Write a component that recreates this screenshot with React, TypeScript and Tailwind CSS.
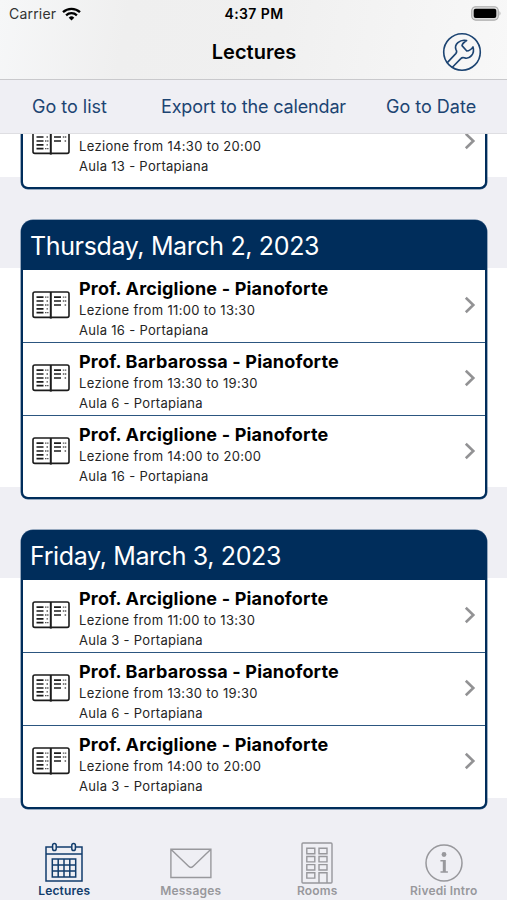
import React from "react";

type Lecture = { title?: string; time: string; room: string };

const thursday: Lecture[] = [
  { title: "Prof. Arciglione - Pianoforte", time: "Lezione from 11:00 to 13:30", room: "Aula 16 - Portapiana" },
  { title: "Prof. Barbarossa - Pianoforte", time: "Lezione from 13:30 to 19:30", room: "Aula 6 - Portapiana" },
  { title: "Prof. Arciglione - Pianoforte", time: "Lezione from 14:00 to 20:00", room: "Aula 16 - Portapiana" },
];

const friday: Lecture[] = [
  { title: "Prof. Arciglione - Pianoforte", time: "Lezione from 11:00 to 13:30", room: "Aula 3 - Portapiana" },
  { title: "Prof. Barbarossa - Pianoforte", time: "Lezione from 13:30 to 19:30", room: "Aula 6 - Portapiana" },
  { title: "Prof. Arciglione - Pianoforte", time: "Lezione from 14:00 to 20:00", room: "Aula 3 - Portapiana" },
];

function BookIcon() {
  return (
    <svg width="38" height="28" viewBox="0 0 38 28" fill="none" stroke="#1c1c1c" className="shrink-0">
      <rect x="1" y="1" width="36" height="25.4" rx="1.8" strokeWidth="1.6" />
      <path d="M18.8 1v26.6" strokeWidth="2" />
      <path d="M4.5 6.2h7M4.5 10h7M4.5 14h7M4.5 17.8h7M4.5 21.7h7M22 6.2h7M22 10h7M22 14h7" strokeWidth="1.7" />
      <path d="M13 6.2h3.5M14.5 10h2M13 14h3.5M14.5 17.8h2M13 21.7h3.5M30.8 6.2h3.5M30.8 10h3.5M32.6 14h1.7" strokeWidth="1.3" strokeDasharray="1.5 .6" stroke="#555" />
    </svg>
  );
}

function Chevron() {
  return (
    <svg width="12" height="18" viewBox="0 0 12 18" fill="none" className="shrink-0">
      <path d="M1.8 1.8 9.3 9l-7.5 7.2" stroke="#929294" strokeWidth="2.6" />
    </svg>
  );
}

function LectureRow({ lecture, last }: { lecture: Lecture; last: boolean }) {
  return (
    <div
      className={`flex h-[73px] shrink-0 items-center pl-[9px] pr-[9px] ${last ? "pb-[3px]" : "border-b border-[#2c5680] pb-[2px]"}`}
    >
      <BookIcon />
      <div className="ml-[9px] flex flex-1 flex-col self-start pt-[6px] text-[13px] whitespace-nowrap text-[#242424]">
        <div className="h-[24px] text-[18px] leading-[25px] font-bold tracking-[0.18px] text-black">{lecture.title}</div>
        <div className="h-[20px] leading-[21px] tracking-[0.33px]">{lecture.time}</div>
        <div className="h-[20px] leading-[21px] tracking-[0.3px]">{lecture.room}</div>
      </div>
      <Chevron />
    </div>
  );
}

function DayCard({ day, lectures }: { day: string; lectures: Lecture[] }) {
  return (
    <section className="mr-[20px] ml-[21px] h-[279px] shrink-0 rounded-t-[12px] rounded-b-[7px] border-2 border-[#002d5b] bg-[#002d5b] shadow-[0_0_0_0.5px_#3f6288]">
      <h2 className="h-[48px] pl-[7px] text-[25px] leading-[49px] font-normal tracking-[-0.36px] whitespace-nowrap text-white">
        {day}
      </h2>
      <div className="h-[227px] rounded-b-[5px] bg-white">
        {lectures.map((l, i) => (
          <LectureRow key={i} lecture={l} last={i === lectures.length - 1} />
        ))}
      </div>
    </section>
  );
}

function CalendarIcon() {
  return (
    <svg width="40" height="42" viewBox="0 0 40 42" fill="none" stroke="currentColor" strokeWidth="1.5">
      <path d="M8.5 5H2v34h36V5h-6.5M12.5 5h15M2 12h36" />
      <rect x="8.6" y="1.5" width="3.6" height="7" rx="1.8" />
      <rect x="27.8" y="1.5" width="3.6" height="7" rx="1.8" />
      <path d="M8.3 17h23.4v18H8.3zM8.3 23h23.4M8.3 29h23.4M14.2 17v18M20 17v18M25.8 17v18" />
    </svg>
  );
}

function MailIcon() {
  return (
    <svg width="42" height="42" viewBox="0 0 42 42" fill="none" stroke="currentColor" strokeWidth="1.4">
      <path d="M.9 7.3h40v28.2H.9zM.9 7.3l17.4 16.8q2.6 2.7 5.2 0L40.9 7.3" />
    </svg>
  );
}

function BuildingIcon() {
  return (
    <svg width="32" height="42" viewBox="0 0 32 42" fill="none" stroke="currentColor" strokeWidth="1.4">
      <rect x="1" y="1" width="30" height="40" rx="1" />
      <path d="M5.8 6.3h8v5.4h-8zM18 6.3h8v5.4h-8zM5.8 14.5h8v5.4h-8zM18 14.5h8v5.4h-8zM5.8 22.6h8V28h-8zM18 22.6h8V28h-8zM5.8 30.7h8v5.4h-8zM18 41V30.7h8V41" />
    </svg>
  );
}

function InfoIcon() {
  return (
    <svg width="40" height="42" viewBox="0 0 40 42" fill="none">
      <circle cx="20" cy="21" r="18" stroke="currentColor" strokeWidth="1.5" />
      <circle cx="20" cy="12.5" r="2.4" fill="currentColor" />
      <path d="M16.4 18h5.4v11.2h2.1v1.5h-7.4v-1.5h2.3v-9.7h-2.4z" fill="currentColor" />
    </svg>
  );
}

function WrenchIcon() {
  return (
    <svg width="40" height="40" viewBox="0 0 40 40" fill="none" stroke="#1c4472" strokeWidth="1.6" strokeLinejoin="round">
      <circle cx="20" cy="20" r="18.3" />
      <path d="M5.3 30.6 13.8 21.6Q15.4 19.8 14 17.6C11.9 12.6 17.6 7 24.6 8.5Q20.4 11.2 20 13.6L24.8 19Q28.2 19 31 14.9C33.2 21.6 27.6 27.8 22.2 25.8Q20.2 25.1 18.8 26.6L10.4 35.2" />
    </svg>
  );
}

function Tab({ label, icon, active }: { label: string; icon: React.ReactNode; active?: boolean }) {
  return (
    <div className={`flex flex-1 flex-col items-center ${active ? "text-[#123d6c]" : "text-[#98989c]"}`}>
      {icon}
      <span className="text-[12px] leading-[14px] font-semibold tracking-[0.18px] whitespace-nowrap">{label}</span>
    </div>
  );
}

export default function App() {
  return (
    <div className="flex h-[900px] w-[507px] flex-col overflow-hidden bg-[#efeff4] font-['Inter','Liberation_Sans',sans-serif] text-black">
      <header className="flex h-[80px] shrink-0 flex-col border-b border-[#c9c9cc] bg-[linear-gradient(100deg,#f6f7f8,#efefef_25%,#f0f0f0_55%,#f8f8f8)]">
        <div className="grid h-[27px] grid-cols-3 items-center pr-[5px] pl-[9px] text-[14px]">
          <div className="flex items-center gap-[6px] text-[#333]">
            <span className="tracking-[0.2px]">Carrier</span>
            <svg width="19" height="14" viewBox="0 0 19 14" fill="none" stroke="#000" strokeWidth="2.3">
              <path d="M1 5.2a12.3 12.3 0 0 1 17 0M4.1 8.3a7.8 7.8 0 0 1 10.8 0" />
              <path d="m9.5 13.6-2.8-2.9a4 4 0 0 1 5.6 0z" fill="#000" stroke="none" />
            </svg>
          </div>
          <div className="pr-[3px] text-center font-semibold tracking-[0.4px]">4:37 PM</div>
          <svg width="31" height="15" viewBox="0 0 31 15" className="justify-self-end">
            <rect x=".7" y=".7" width="26.6" height="13.4" rx="4" fill="#ddd" stroke="#aaa" strokeWidth="1.1" />
            <rect x="2.7" y="2.7" width="22.6" height="9.4" rx="2" fill="#000" />
            <path d="M28.5 5q2 2.4 0 4.8z" fill="#aaa" />
          </svg>
        </div>
        <div className="grid h-[50px] grid-cols-[1fr_auto_1fr] items-center pr-[25px] pl-[26px]">
          <span />
          <h1 className="text-[20px] font-semibold">Lectures</h1>
          <div className="justify-self-end"><WrenchIcon /></div>
        </div>
      </header>
      <nav className="flex h-[54px] shrink-0 items-center border-b border-[#dedee2] pl-[32px] text-[18px] whitespace-nowrap text-[#1c4472]">
        <span className="w-[129px]">Go to list</span>
        <span className="w-[225px] tracking-[-0.14px]">Export to the calendar</span>
        <span>Go to Date</span>
      </nav>
      <main className="flex h-[703px] shrink-0 flex-col overflow-hidden bg-[linear-gradient(to_bottom,#fff_0_43px,#efeff4_43px_134px,#fff_134px_353px,#efeff4_353px_444px,#fff_444px_664px,#efeff4_664px)]">
        <div className="mr-[20px] mb-[31px] ml-[21px] flex h-[55px] shrink-0 flex-col justify-end rounded-b-[7px] border-2 border-t-0 border-[#002d5b] bg-white pb-[8px] shadow-[0_0_0_0.5px_#3f6288]">
          <LectureRow lecture={{ time: "Lezione from 14:30 to 20:00", room: "Aula 13 - Portapiana" }} last />
        </div>
        <DayCard day="Thursday, March 2, 2023" lectures={thursday} />
        <div className="h-[31px] shrink-0" />
        <DayCard day="Friday, March 3, 2023" lectures={friday} />
      </main>
      <footer className="flex h-[63px] shrink-0 pt-[5px] pl-[1px]">
        <Tab label="Lectures" icon={<CalendarIcon />} active />
        <Tab label="Messages" icon={<MailIcon />} />
        <Tab label="Rooms" icon={<BuildingIcon />} />
        <Tab label="Rivedi Intro" icon={<InfoIcon />} />
      </footer>
    </div>
  );
}
